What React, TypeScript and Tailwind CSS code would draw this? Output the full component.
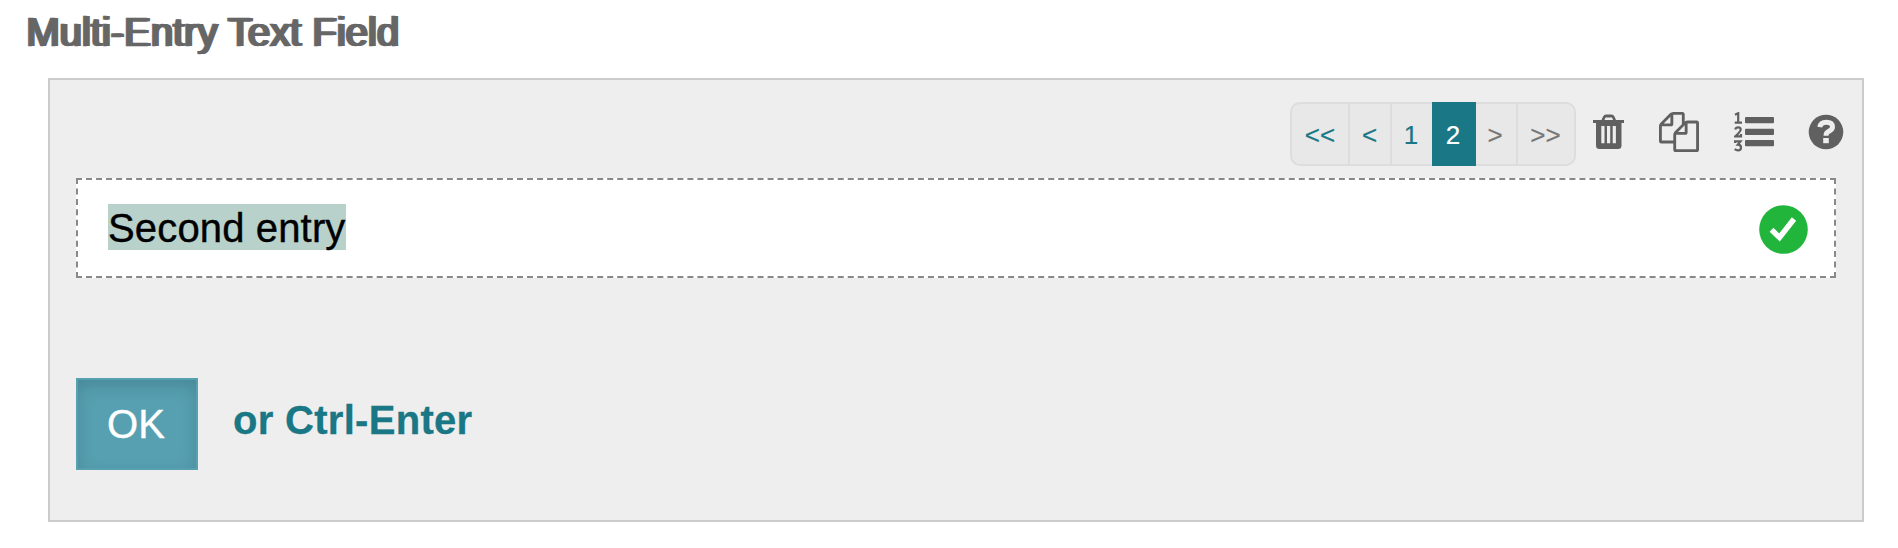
function TrashIcon() {
  return (
    <svg width="32" height="36" viewBox="0 0 32 36" fill="#606060" aria-label="Delete">
      <path
        fillRule="evenodd"
        d="M8.500 6 10 2.500Q11 .5 13 .5H18.500Q20.500 .5 21.500 2.500L23 6H31V9H28.500V31.500Q28.500 35 25 35H6.500Q3 35 3 31.500V9H0V6ZM11.500 6H20L19 3.500H12.500ZM8.300 12V29.300H11.500V12ZM14 12V29.300H17.200V12ZM19.700 12V29.300H22.900V12Z"
      />
    </svg>
  );
}

function CopyIcon() {
  return (
    <svg width="40" height="40" viewBox="0 0 1792 1792" fill="#606060" aria-label="Copy">
      <path d="M1696 384q40 0 68 28t28 68v1216q0 40-28 68t-68 28h-960q-40 0-68-28t-28-68v-288h-544q-40 0-68-28t-28-68v-672q0-40 20-88t48-76l408-408q28-28 76-48t88-20h416q40 0 68 28t28 68v328q68-40 128-40h416zm-544 213l-299 299h299v-299zm-640-384l-299 299h299v-299zm196 647l316-316v-416h-384v416q0 40-28 68t-68 28h-416v640h512v-256q0-40 20-88t48-76zm956 804v-1152h-384v416q0 40-28 68t-68 28h-416v640h896z" />
    </svg>
  );
}

function NumberedListIcon() {
  return (
    <svg width="40" height="42" viewBox="0 0 40 42" fill="#606060" aria-label="Numbered list">
      <g fill="none" stroke="#606060" strokeWidth="2.200">
        <path d="M1 2.800 4.200 1.200V10.500M.7 10.700H8" />
        <path d="M1.200 17.500Q1.800 15.300 4.200 15.300Q6.700 15.300 6.700 17.400Q6.700 19.300 1.400 24.300H7V22" />
        <path d="M1 31V29.400H6.500L3.800 32.600Q7 32.600 7 35.400Q7 38.400 4 38.400Q2 38.400 .7 37" />
      </g>
      <rect x="11" y="5" width="29" height="6.300" rx="1" />
      <rect x="11" y="16.700" width="29" height="6.300" rx="1" />
      <rect x="11" y="28" width="29" height="6.300" rx="1" />
    </svg>
  );
}

function HelpIcon() {
  return (
    <svg width="36" height="36" viewBox="0 0 36 36" aria-label="Help">
      <circle cx="18" cy="18" r="17.300" fill="#606060" />
      <path d="M11.800 13.200Q12.500 8.200 18.300 8.200Q24.500 8.200 24.500 13Q24.500 15.500 20.500 17.500Q18 18.800 18 21.700" fill="none" stroke="#eee" strokeWidth="5" />
      <rect x="15.200" y="24" width="5.600" height="5.200" fill="#eee" />
    </svg>
  );
}

function CheckIcon() {
  return (
    <svg width="50" height="50" viewBox="0 0 50 50" aria-label="Valid">
      <circle cx="25.500" cy="25.500" r="24.300" fill="#21b63b" />
      <path d="M13.500 25.800 21.500 33.500 36 15" fill="none" stroke="#fff" strokeWidth="5.500" />
    </svg>
  );
}

export default function App() {
  return (
    <div className="h-[548px] w-[1898px] overflow-hidden bg-white font-['Liberation_Sans',Arial,sans-serif]">
      <h1 className="h-[78px] pl-[25px] pt-[9px] text-[40px] leading-[46px] text-[#666] [-webkit-text-stroke:0.4px_#666] [text-shadow:1px_0_0_#666,2px_0_0_#666,3px_0_0_#666]">
        Multi-Entry Text Field
      </h1>
      <section className="ml-[48px] h-[444px] w-[1816px] border-2 border-[#ccc] bg-[#eee] px-[26px] pt-[22px]">
        <div className="mr-[-10px] flex h-[76px] items-start justify-end">
          <nav className="flex h-[64px] w-[286px] text-[26px] text-[#1a7785] [-webkit-text-stroke:0.2px]">
            <a className="w-[60px] rounded-l-[10px] border-2 border-[#ddd] bg-[#e8e8e8] text-center leading-[63px]">&lt;&lt;</a>
            <a className="w-[42px] border-y-2 border-r-2 border-[#ddd] bg-[#e8e8e8] pr-[1px] text-center leading-[63px]">&lt;</a>
            <a className="w-[40px] border-y-2 border-[#ddd] bg-[#e8e8e8] pr-[2px] text-center leading-[62px]">1</a>
            <a className="w-[44px] bg-[#1a7785] pr-[2px] text-center leading-[66px] text-white">2</a>
            <a className="w-[42px] border-y-2 border-r-2 border-[#ddd] bg-[#e8e8e8] pr-[2px] text-center leading-[63px] text-[#777]">&gt;</a>
            <a className="w-[58px] rounded-r-[10px] border-y-2 border-r-2 border-[#ddd] bg-[#e8e8e8] pr-[1px] text-center leading-[63px] text-[#777]">&gt;&gt;</a>
          </nav>
          <div className="flex w-[270px] pl-[17px] pt-[10px]">
            <div className="pt-[2px]"><TrashIcon /></div>
            <div className="ml-[34px]"><CopyIcon /></div>
            <div className="ml-[35px]"><NumberedListIcon /></div>
            <div className="ml-[34px] pt-[2px]"><HelpIcon /></div>
          </div>
        </div>
        <div className="flex h-[100px] w-[1760px] items-start justify-between border-2 border-dashed border-[#888] bg-white pl-[30px] pr-[26px] pt-[24px]">
          <span className="h-[46px] w-[238px] whitespace-nowrap bg-[#b8d1ca] text-[40px] leading-[48px] tracking-[0.15px] text-black [-webkit-text-stroke:0.4px]">Second entry</span>
          <CheckIcon />
        </div>
        <div className="mt-[100px] flex">
          <button className="h-[92px] w-[122px] border-2 border-[#56a0b1] bg-[#56a0b1] pr-[2px] text-[40px] leading-[88px] text-white shadow-[inset_0_6px_16px_rgba(0,0,0,0.15)] [-webkit-text-stroke:0.4px]">OK</button>
          <span className="ml-[35px] pt-[19px] text-[40px] font-bold leading-[46px] tracking-[0.3px] text-[#1a7785] [-webkit-text-stroke:0.3px]">or Ctrl-Enter</span>
        </div>
      </section>
    </div>
  );
}
